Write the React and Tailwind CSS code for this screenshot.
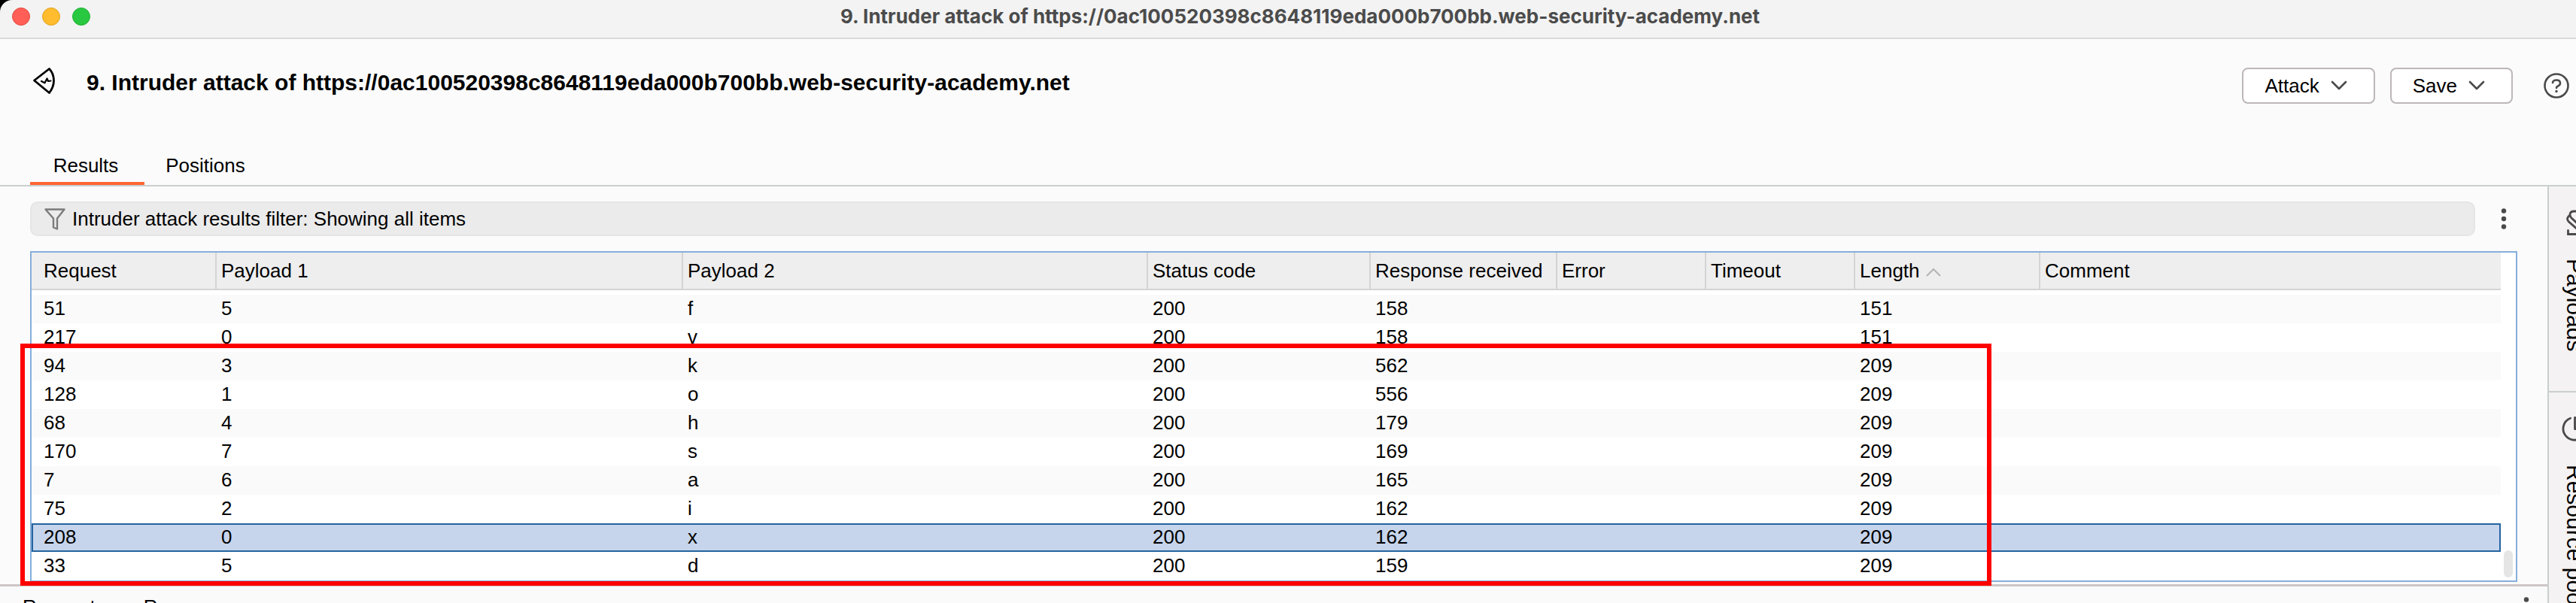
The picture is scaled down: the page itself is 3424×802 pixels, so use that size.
const columns = [
  { label: "Request", width: "w-[246px]" },
  { label: "Payload 1", width: "w-[620px]" },
  { label: "Payload 2", width: "w-[618px]" },
  { label: "Status code", width: "w-[296px]" },
  { label: "Response received", width: "w-[248px]" },
  { label: "Error", width: "w-[198px]" },
  { label: "Timeout", width: "w-[198px]" },
  { label: "Length", width: "w-[246px]", sorted: true },
  { label: "Comment", width: "" },
];

const rows = [
  ["51", "5", "f", "200", "158", "", "", "151", ""],
  ["217", "0", "v", "200", "158", "", "", "151", ""],
  ["94", "3", "k", "200", "562", "", "", "209", ""],
  ["128", "1", "o", "200", "556", "", "", "209", ""],
  ["68", "4", "h", "200", "179", "", "", "209", ""],
  ["170", "7", "s", "200", "169", "", "", "209", ""],
  ["7", "6", "a", "200", "165", "", "", "209", ""],
  ["75", "2", "i", "200", "162", "", "", "209", ""],
  ["208", "0", "x", "200", "162", "", "", "209", ""],
  ["33", "5", "d", "200", "159", "", "", "209", ""],
];

const selectedRequest = "208";
const attackName =
  "9. Intruder attack of https://0ac100520398c8648119eda000b700bb.web-security-academy.net";

function TitleBar() {
  return (
    <div className="bg-black">
      <header className="flex h-[52px] items-center rounded-tl-[16px] border-b-2 border-[#d9d9d9] bg-[#f3f3f3] pb-1.5 pl-4">
        <div className="flex gap-4">
          <button aria-label="Close" className="size-6 rounded-full border border-[#e24b41] bg-[#ff5f57]" />
          <button aria-label="Minimise" className="size-6 rounded-full border border-[#e1a325] bg-[#febc2e]" />
          <button aria-label="Zoom" className="size-6 rounded-full border border-[#24b138] bg-[#28c840]" />
        </div>
        <div className="flex-1 pr-[88px] text-center font-[Inter,sans-serif] text-[26px] leading-8 font-bold text-[#4b4b4b]">
          {attackName}
        </div>
      </header>
    </div>
  );
}

function IntruderIcon() {
  return (
    <svg viewBox="0 0 32 38" className="h-[38px] w-8" fill="none" stroke="#000" strokeWidth="2.8" strokeLinejoin="round" strokeLinecap="round" aria-hidden="true">
      <path d="M23.500 2.500 L3.500 18 L23.500 34.500 Q29.500 27 29.500 18 Q29.500 9 23.500 2.500 Z" />
      <path d="M13 19 L17.500 21.300 L20.500 15.500 L22 19 L25.500 18.500" strokeWidth="2.2" />
    </svg>
  );
}

function Chevron() {
  return (
    <svg viewBox="0 0 24 16" className="h-4 w-6" fill="none" stroke="#4a4a4a" strokeWidth="2.6" strokeLinecap="round" strokeLinejoin="round" aria-hidden="true">
      <path d="M3 3 L12 12 L21 3" />
    </svg>
  );
}

function MenuButton({ label }) {
  return (
    <button className="flex h-12 items-center gap-3.5 rounded-lg border-2 border-[#bdb7b9] bg-white pr-[34px] pl-7">
      {label}
      <Chevron />
    </button>
  );
}

function Dots() {
  return (
    <svg viewBox="0 0 8 28" className="h-7 w-2" fill="#4a4a4a" aria-hidden="true">
      <circle cx="4" cy="3.500" r="3.200" />
      <circle cx="4" cy="14" r="3.200" />
      <circle cx="4" cy="24.500" r="3.200" />
    </svg>
  );
}

function AttackHeader() {
  return (
    <div className="flex h-[134px] items-start pr-2 pl-[42px]">
      <div className="flex h-28 w-[73px] items-center">
        <IntruderIcon />
      </div>
      <h1 className="flex h-[116px] flex-1 items-center text-[30px] font-bold">{attackName}</h1>
      <div className="flex items-center gap-5 pt-[38px]">
        <MenuButton label="Attack" />
        <MenuButton label="Save" />
        <button aria-label="Help" className="ml-5">
          <svg viewBox="0 0 36 36" className="size-9" fill="none" stroke="#4a4a4a" strokeWidth="2.6" strokeLinecap="round" aria-hidden="true">
            <circle cx="18" cy="18" r="15.500" />
            <path d="M13 14 Q13.500 10.500 18 10.500 Q23 10.500 23 14.500 Q23 17 20.500 18.200 Q18 19.300 18 21" />
            <circle cx="18" cy="25.500" r="1.700" fill="#4a4a4a" stroke="none" />
          </svg>
        </button>
      </div>
    </div>
  );
}

function Tabs() {
  return (
    <nav className="flex h-[62px] items-stretch border-b-2 border-[#c9cfce] pl-10" role="tablist">
      <button role="tab" aria-selected="true" className="w-[152px] border-b-4 border-[#ff6633] pt-3 pr-1">
        Results
      </button>
      <button role="tab" aria-selected="false" className="w-[166px] border-b-4 border-transparent pt-3 pr-1">
        Positions
      </button>
    </nav>
  );
}

function FilterBar() {
  return (
    <div className="flex items-center pr-3.5">
      <button className="flex h-[46px] flex-1 items-center gap-2 rounded-[10px] border-2 border-[#e5e5e5] bg-[#ebebeb] pl-4">
        <svg viewBox="0 0 30 30" className="size-[30px]" fill="none" stroke="#7b7b7b" strokeWidth="2.400" strokeLinejoin="round" aria-hidden="true">
          <path d="M2.500 2.500 H27.500 L18 14.500 V28.500 L13 26.500 V14.500 Z" />
        </svg>
        Intruder attack results filter: Showing all items
      </button>
      <button aria-label="More options" className="ml-[34px]">
        <Dots />
      </button>
    </div>
  );
}

function ResultsTable() {
  return (
    <div className="mt-5 flex border-2 border-[#86aeda] bg-white">
      <table className="flex-1 table-fixed border-separate border-spacing-0 text-left">
        <thead>
          <tr className="h-[50px] bg-[#eeeeee]">
            {columns.map((c) => (
              <th
                key={c.label}
                className={`${c.width} border-r-2 border-b-2 border-[#d4d4d4] p-0 pl-1.5 font-normal whitespace-nowrap first:pl-4 last:border-r-0`}
              >
                {c.label}
                {c.sorted && (
                  <svg viewBox="0 0 20 12" className="ml-2 inline h-3 w-5" fill="none" stroke="#b4b4b4" strokeWidth="2" aria-hidden="true">
                    <path d="M1 11 L10 2 L19 11" />
                  </svg>
                )}
              </th>
            ))}
          </tr>
        </thead>
        <tbody className="before:block before:h-1.5 before:content-['']">
          {rows.map((r) => (
            <tr
              key={r[0]}
              className={
                r[0] === selectedRequest
                  ? "h-[38px] bg-[#c6d5ec] outline-2 -outline-offset-2 outline-[#25649f]"
                  : "h-[38px] odd:bg-[#fafafa] last:bg-white"
              }
            >
              {r.map((v, i) => (
                <td key={i} className="p-0 pb-0.5 pl-1.5 first:pl-4">
                  {v}
                </td>
              ))}
            </tr>
          ))}
        </tbody>
      </table>
      <div className="flex w-5 items-end justify-center pb-1">
        <div className="h-9 w-3 rounded-full bg-[#e5e5e5]" />
      </div>
    </div>
  );
}

function SideBar() {
  return (
    <aside className="flex w-[38px] flex-col overflow-hidden border-l-2 border-[#c9cfce] bg-[#f4f2f3] text-[30px]">
      <button className="flex h-[274px] w-[68px] shrink-0 flex-col items-center gap-7 border-b-2 border-[#c9cfce] pt-7">
        <svg viewBox="0 0 24 40" className="h-10 w-6 shrink-0" fill="none" stroke="#4a4a4a" strokeWidth="2.8" strokeLinecap="round" aria-hidden="true">
          <path d="M18 5 H11.500 Q6 5 6 9.500 Q6 12 8 14 L20 25 M5.500 10.500 Q0.500 14 4 18.500 L18 31 M3.500 30.500 V35.500 H22" />
        </svg>
        <span className="[writing-mode:vertical-rl]">Payloads</span>
      </button>
      <button className="flex w-[68px] shrink-0 flex-col items-center gap-[30px] pt-[30px]">
        <svg viewBox="0 0 36 36" className="size-9 shrink-0" fill="none" stroke="#4a4a4a" strokeWidth="2.8" strokeLinecap="round" strokeLinejoin="round" aria-hidden="true">
          <path d="M12.500 4.200 A15 15 0 1 0 32 23.500 M18.500 3.500 V18.500 H33 Q32 5 18.500 3.500 Z" />
        </svg>
        <span className="whitespace-nowrap [writing-mode:vertical-rl]">Resource pool</span>
      </button>
    </aside>
  );
}

export default function App() {
  return (
    <div className="flex h-screen flex-col overflow-hidden bg-[#fbfbfb] font-['Liberation_Sans',Arial,sans-serif] text-[26px] leading-[30px] text-black">
      <TitleBar />
      <AttackHeader />
      <Tabs />
      <div className="flex min-h-0 flex-1">
        <main className="flex min-w-0 flex-1 flex-col">
          <section className="relative pt-5 pr-10 pb-[3px] pl-10">
            <FilterBar />
            <ResultsTable />
            <div className="pointer-events-none absolute top-[209px] -bottom-0.5 left-[27px] w-[2620px] border-6 border-[#ff0000]" />
          </section>
          <section className="flex min-h-0 flex-1 items-start justify-between overflow-hidden border-t-[3px] border-[#cdc6c7] bg-[#fafafa] pt-3 pr-6 pl-[30px]">
            <div className="flex gap-16">
              <button>Request</button>
              <button>Response</button>
            </div>
            <button aria-label="Message options" className="pt-0.5">
              <Dots />
            </button>
          </section>
        </main>
        <SideBar />
      </div>
    </div>
  );
}
